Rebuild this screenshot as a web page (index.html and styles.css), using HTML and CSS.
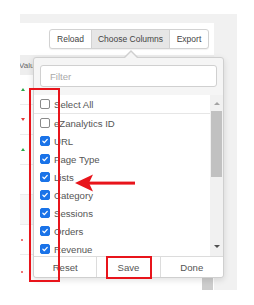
FILE: index.html
```html
<!DOCTYPE html>
<html>
<head>
<meta charset="utf-8">
<link rel="stylesheet" href="styles.css">
</head>
<body>
<div class="page">
  <div class="card">
    <div class="toolbar">
      <div class="btn-group">
        <div class="btn btn-reload">Reload</div>
        <div class="btn btn-choose">Choose Columns</div>
        <div class="btn btn-export">Export</div>
      </div>
    </div>
    <div class="table">
      <div class="thead"><span class="th-text">Valu</span></div>
      <div class="tbody">
        <div class="tcols">
          <div class="trow"><span class="tri up"></span></div>
          <div class="trow"><span class="tri down"></span></div>
          <div class="trow"><span class="tri up"></span></div>
          <div class="trow"></div>
          <div class="trow"></div>
          <div class="trow"><span class="dot"></span></div>
          <div class="trow last"><span class="dot"></span><span class="money">$1.23 &nbsp;$2.1</span></div>
        </div>
        <div class="vscroll"><div class="vthumb"></div></div>
      </div>
    </div>
  </div>
</div>

<div class="popover">
  <div class="filter-wrap"><input class="filter" type="text" placeholder="Filter"></div>
  <div class="list-box">
    <div class="list">
      <div class="item item-all"><span class="cb"></span><span>Select All</span></div>
      <div class="item"><span class="cb"></span><span>eZanalytics ID</span></div>
      <div class="item"><span class="cb on"><svg viewBox="0 0 10 10"><path d="M2.3 5.2 L4.2 7.1 L7.8 3" /></svg></span><span>URL</span></div>
      <div class="item"><span class="cb on"><svg viewBox="0 0 10 10"><path d="M2.3 5.2 L4.2 7.1 L7.8 3" /></svg></span><span>Page Type</span></div>
      <div class="item"><span class="cb on"><svg viewBox="0 0 10 10"><path d="M2.3 5.2 L4.2 7.1 L7.8 3" /></svg></span><span>Lists</span></div>
      <div class="item"><span class="cb on"><svg viewBox="0 0 10 10"><path d="M2.3 5.2 L4.2 7.1 L7.8 3" /></svg></span><span>Category</span></div>
      <div class="item"><span class="cb on"><svg viewBox="0 0 10 10"><path d="M2.3 5.2 L4.2 7.1 L7.8 3" /></svg></span><span>Sessions</span></div>
      <div class="item"><span class="cb on"><svg viewBox="0 0 10 10"><path d="M2.3 5.2 L4.2 7.1 L7.8 3" /></svg></span><span>Orders</span></div>
      <div class="item"><span class="cb on"><svg viewBox="0 0 10 10"><path d="M2.3 5.2 L4.2 7.1 L7.8 3" /></svg></span><span>Revenue</span></div>
      <div class="item"><span class="cb on"><svg viewBox="0 0 10 10"><path d="M2.3 5.2 L4.2 7.1 L7.8 3" /></svg></span><span>Revenue per Session</span></div>
    </div>
    <div class="sbar">
      <span class="sarrow sup"></span>
      <div class="sthumb"></div>
      <span class="sarrow sdown"></span>
    </div>
  </div>
  <div class="footer">
    <div class="fbtn">Reset</div>
    <div class="fbtn">Save</div>
    <div class="fbtn">Done</div>
  </div>
</div>

<div class="mark mark-col"></div>
<div class="mark mark-save"></div>
<svg class="red-arrow" viewBox="0 0 64 22" width="64" height="22">
  <rect x="14" y="9.6" width="47" height="3" fill="#e8141b"/>
  <polygon points="1,11 19,2.5 15,11 19,19.5" fill="#e8141b"/>
</svg>
</body>
</html>
```

FILE: styles.css
```css
* { box-sizing: border-box; }
html, body { margin: 0; padding: 0; background: #fff; }
body {
  width: 254px;
  height: 305px;
  overflow: hidden;
  font-family: "Liberation Sans", Arial, sans-serif;
  color: #555;
}

.page {
  margin: 14px 0 0 20px;
  width: 217px;
  height: 276px;
  background: #f1f1f1;
  padding-top: 9px;
}

.card {
  width: 194px;
  height: 267px;
  background: #fff;
  display: flex;
  flex-direction: column;
}

.toolbar {
  height: 32px;
  display: flex;
  justify-content: flex-end;
  align-items: flex-start;
  padding: 6px 5px 0 0;
}

.btn-group {
  display: flex;
  height: 20px;
  border: 1px solid #d2d2d2;
  border-radius: 3px;
  box-shadow: 0 1px 1px rgba(0,0,0,0.06);
  background: #fff;
}
.btn {
  font-size: 8.5px;
  color: #444;
  display: flex;
  align-items: center;
  justify-content: center;
  height: 18px;
}
.btn-reload { width: 41px; }
.btn-choose { width: 79px; background: #e6e6e6; border-left: 1px solid #d2d2d2; border-right: 1px solid #d2d2d2; }
.btn-export { width: 38px; }

.table { flex: 1; display: flex; flex-direction: column; overflow: hidden; }
.thead {
  height: 22px;
  background: #eeeeee;
  display: flex;
  align-items: center;
  font-size: 8px;
  color: #666;
  overflow: hidden;
}
.th-text { margin-left: -1px; }

.tbody { flex: 1; display: flex; }
.tcols { flex: 1; display: flex; flex-direction: column; }
.trow {
  height: 30px;
  border-bottom: 1px solid #ececec;
  display: flex;
  align-items: center;
  padding-left: 1px;
  position: relative;
}
.trow:nth-child(5) { background: #f7f7f7; }
.trow.last { border-bottom: none; height: 35px; align-items: flex-start; }

.tri { width: 0; height: 0; border-left: 2px solid transparent; border-right: 2px solid transparent; }
.tri.up { border-bottom: 3px solid #2aa84a; }
.tri.down { border-top: 3px solid #e23a3a; }
.dot { width: 2px; height: 2px; background: #e84a4a; border-radius: 1px; }
.trow.last .dot { margin-top: 16px; }
.money {
  margin-left: 68px;
  margin-top: 13px;
  font-size: 8px;
  color: #444;
  border-left: 1px solid #ddd;
  padding-left: 6px;
}

.vscroll { width: 12px; display: flex; flex-direction: column; justify-content: flex-end; }
.vthumb { width: 11px; height: 12px; background: #cdcdcd; margin-bottom: 0; }

/* popover (menu over content) */
.popover {
  position: absolute;
  left: 33px;
  top: 57px;
  width: 191px;
  height: 221px;
  background: #f5f5f5;
  border: 1px solid #cfcfcf;
  border-radius: 3px;
  box-shadow: 0 2px 6px rgba(0,0,0,0.12);
  display: flex;
  flex-direction: column;
}
.popover::before {
  content: "";
  position: absolute;
  left: 89px;
  top: -8px;
  border-left: 8px solid transparent;
  border-right: 8px solid transparent;
  border-bottom: 8px solid #cfcfcf;
}
.popover::after {
  content: "";
  position: absolute;
  left: 90px;
  top: -6px;
  border-left: 7px solid transparent;
  border-right: 7px solid transparent;
  border-bottom: 7px solid #f5f5f5;
}

.filter-wrap { padding: 7px 6px 0 6px; }
.filter {
  display: block;
  width: 177px;
  height: 22px;
  border: 1px solid #d0d0d0;
  border-radius: 3px;
  background: #fff;
  padding: 0 0 0 9px;
  font-family: "Liberation Sans", Arial, sans-serif;
  font-size: 9.6px;
  color: #555;
  outline: none;
}
.filter::placeholder { color: #aaa; }

.list-box {
  margin-top: 8px;
  height: 161px;
  display: flex;
  background: #fff;
}
.list { flex: 1; overflow: hidden; }
.item {
  height: 18px;
  display: flex;
  align-items: center;
  gap: 4px;
  padding-left: 6px;
  font-size: 9.6px;
  color: #555;
  white-space: nowrap;
}
.item-all { height: 19px; border-bottom: 1px solid #e6e6e6; }
.cb {
  width: 10px;
  height: 10px;
  border: 1px solid #8a8a8a;
  border-radius: 2px;
  background: #fff;
  flex: none;
  display: block;
}
.cb.on { background: #1a73e8; border-color: #1a73e8; }
.cb svg { display: block; width: 8px; height: 8px; }
.cb svg path { fill: none; stroke: #fff; stroke-width: 1.6; stroke-linecap: round; stroke-linejoin: round; }

.sbar {
  width: 13px;
  background: #f1f1f1;
  display: flex;
  flex-direction: column;
  align-items: center;
  padding-top: 7px;
}
.sarrow { width: 0; height: 0; border-left: 3px solid transparent; border-right: 3px solid transparent; }
.sup { border-bottom: 3px solid #a3a3a3; }
.sdown { border-top: 3px solid #505050; margin-top: 68px; }
.sthumb { width: 11px; height: 66px; background: #c1c1c1; margin-top: 6px; }

.footer {
  height: 21px;
  display: flex;
  border-top: 1px solid #dcdcdc;
  background: #fff;
  border-radius: 0 0 3px 3px;
}
.fbtn {
  flex: 1;
  display: flex;
  align-items: center;
  justify-content: center;
  font-size: 9.6px;
  color: #555;
}
.fbtn + .fbtn { border-left: 1px solid #dcdcdc; }

/* annotations */
.mark { position: absolute; border: 2px solid #e8141b; }
.mark-col { left: 29px; top: 88px; width: 31px; height: 194px; }
.mark-save { left: 106px; top: 256px; width: 46px; height: 23px; }
.red-arrow { position: absolute; left: 74px; top: 172px; }
```
